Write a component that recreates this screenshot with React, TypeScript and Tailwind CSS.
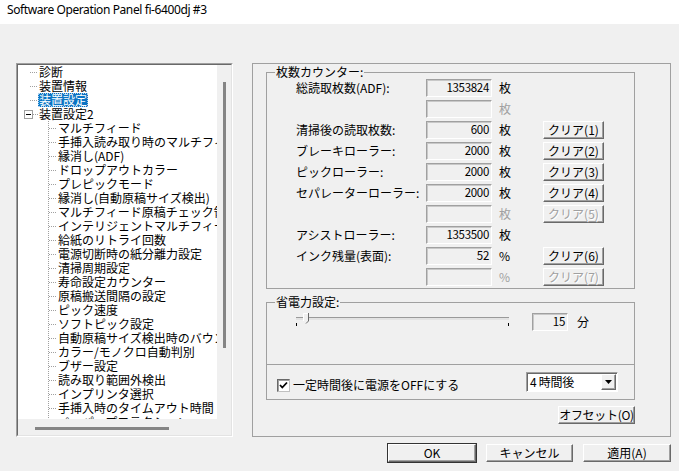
import React from "react";

const FONT = "font-['Noto_Sans_CJK_JP','Noto_Sans',sans-serif]";

const btnBase =
  "h-[18px] shrink-0 whitespace-nowrap flex items-center justify-center bg-[#f0f0f0] border border-t-white border-l-white border-r-[#696969] border-b-[#696969] shadow-[inset_-1px_-1px_#a0a0a0] text-[12px] leading-none";

function Btn({ w, children, disabled }: { w: string; children: React.ReactNode; disabled?: boolean }) {
  return (
    <div className={`${btnBase} ${w} ${disabled ? "text-[#a0a0a0] [text-shadow:1px_1px_#fff]" : "text-black"}`}>
      {children}
    </div>
  );
}

const fieldCls =
  "h-[18px] shrink-0 bg-[#f0f0f0] border border-t-[#a0a0a0] border-l-[#a0a0a0] border-r-white border-b-white shadow-[inset_1px_1px_#c8c8c8] flex items-center justify-end pr-[2px] text-[11.5px] leading-none tracking-[-0.3px]";

type Row = { label?: string; value?: string; unit: string; btn?: string; disabled?: boolean };

const rows: Row[] = [
  { label: "総読取枚数(ADF):", value: "1353824", unit: "枚" },
  { unit: "枚", disabled: true },
  { label: "清掃後の読取枚数:", value: "600", unit: "枚", btn: "クリア(1)" },
  { label: "ブレーキローラー:", value: "2000", unit: "枚", btn: "クリア(2)" },
  { label: "ピックローラー:", value: "2000", unit: "枚", btn: "クリア(3)" },
  { label: "セパレーターローラー:", value: "2000", unit: "枚", btn: "クリア(4)" },
  { unit: "枚", btn: "クリア(5)", disabled: true },
  { label: "アシストローラー:", value: "1353500", unit: "枚" },
  { label: "インク残量(表面):", value: "52", unit: "%", btn: "クリア(6)" },
  { unit: "%", btn: "クリア(7)", disabled: true },
];

const children = [
  "マルチフィード",
  "手挿入読み取り時のマルチフィード設定",
  "縁消し(ADF)",
  "ドロップアウトカラー",
  "プレピックモード",
  "縁消し(自動原稿サイズ検出)",
  "マルチフィード原稿チェック領域設定",
  "インテリジェントマルチフィード設定",
  "給紙のリトライ回数",
  "電源切断時の紙分離力設定",
  "清掃周期設定",
  "寿命設定カウンター",
  "原稿搬送間隔の設定",
  "ピック速度",
  "ソフトピック設定",
  "自動原稿サイズ検出時のバウンダリ",
  "カラー/モノクロ自動判別",
  "ブザー設定",
  "読み取り範囲外検出",
  "インプリンタ選択",
  "手挿入時のタイムアウト時間",
  "ペーパープロテクション",
];

const hdots = "h-px shrink-0 bg-[repeating-linear-gradient(90deg,#a0a0a0_0_1px,transparent_1px_2px)]";
const vdots = "w-px h-full shrink-0 bg-[repeating-linear-gradient(180deg,#a0a0a0_0_1px,transparent_1px_2px)]";

function RootItem({ text, selected }: { text: string; selected?: boolean }) {
  return (
    <div className="h-[14px] flex items-center pl-[12px] whitespace-nowrap">
      <div className={`${hdots} w-[8px]`} />
      <span
        className={`shrink-0 px-[1px] h-[14px] leading-[14px] ${selected ? "bg-[#0a74c4] text-white outline-1 outline-dotted outline-[#b5d4ee] -outline-offset-1" : ""}`}
      >
        {text}
      </span>
    </div>
  );
}

function ChildItem({ text }: { text: string }) {
  return (
    <div className="h-[14px] flex items-center pl-[30px] whitespace-nowrap">
      <div className={vdots} />
      <div className={`${hdots} w-[8px]`} />
      <span className="shrink-0 pl-[1px] leading-[14px]">{text}</span>
    </div>
  );
}

export default function App() {
  return (
    <div className={`w-[679px] h-[471px] bg-[#f0f0f0] flex flex-col overflow-hidden text-black ${FONT}`}>
      {/* title bar */}
      <div className="h-[24px] shrink-0 bg-white pl-[7px] pt-[1px] text-[12px] leading-[18px] font-['Noto_Sans',sans-serif] tracking-[-0.4px]">
        Software Operation Panel fi-6400dj #3
      </div>

      <div className="flex pl-[16px] pt-[39px]">
        {/* tree */}
        <div className="w-[217px] h-[374px] shrink-0 border border-t-[#a0a0a0] border-l-[#a0a0a0] border-r-white border-b-white">
          <div className="w-full h-full border border-t-[#696969] border-l-[#696969] border-r-[#e3e3e3] border-b-[#e3e3e3] flex flex-col">
            <div className="flex h-[354px]">
              <div className="w-[199px] shrink-0 h-full bg-white overflow-hidden text-[12px]">
                <RootItem text="診断" />
                <RootItem text="装置情報" />
                <RootItem text="装置設定" selected />
                <div className="h-[14px] flex items-center pl-[6px] whitespace-nowrap">
                  <div className="w-[9px] h-[9px] shrink-0 border border-[#a0a0a0] bg-white flex items-center justify-center">
                    <div className="w-[5px] h-px bg-black" />
                  </div>
                  <div className={`${hdots} w-[5px]`} />
                  <span className="shrink-0 px-[1px] leading-[14px]">装置設定2</span>
                </div>
                {children.map((c) => (
                  <ChildItem key={c} text={c} />
                ))}
              </div>
              <div className="w-[14px] h-full pl-[6px] pt-[17px]">
                <div className="w-[3px] h-[266px] bg-[#858585]" />
              </div>
            </div>
            <div className="flex-1 pl-[17px] pt-[8px]">
              <div className="w-[134px] h-[3px] bg-[#858585]" />
            </div>
          </div>
        </div>

        {/* right panel */}
        <div className="ml-[19px] w-[419px] h-[374px] shrink-0 border border-[#a0a0a0] pl-[13px] pt-px">
          <fieldset className="w-[369px] border border-[#a0a0a0] pb-[2px]">
            <legend className="ml-[8px] px-[1px] text-[12px] leading-[14px]">枚数カウンター:</legend>
            <div className="flex flex-col gap-[3px]">
              {rows.map((r, i) => (
                <div key={i} className="flex items-center h-[18px] pl-[29px] text-[12px]">
                  <div className="w-[130px] shrink-0 leading-none whitespace-nowrap">{r.label ?? ""}</div>
                  <div className={`${fieldCls} w-[66px]`}>{r.value ?? ""}</div>
                  <div className={`ml-[7px] w-[44px] shrink-0 leading-none ${r.disabled ? "text-[#a0a0a0]" : ""}`}>{r.unit}</div>
                  {r.btn ? (
                    <Btn w="w-[61px]" disabled={r.disabled}>
                      {r.btn}
                    </Btn>
                  ) : null}
                </div>
              ))}
            </div>
          </fieldset>

          <fieldset className="mt-[6px] w-[369px] h-[70px] border border-[#a0a0a0]">
            <legend className="ml-[8px] px-[1px] text-[12px] leading-[14px]">省電力設定:</legend>
            <div className="flex items-center mt-[4px] pl-[29px] h-[18px]">
              <div className="relative w-[213px] h-[18px] shrink-0">
                <div className="absolute left-0 right-0 top-[4px] h-[3px] bg-[#e3e3e3] border-t border-[#9a9a9a]" />
                <div className="absolute left-0 top-[10px] w-px h-[3px] bg-black" />
                <div className="absolute right-0 top-[10px] w-px h-[3px] bg-black" />
                <svg className="absolute left-[7px] top-0" width="6" height="11" viewBox="0 0 6 11">
                  <polygon points="0,0 5,0 5,8 3,10.5 0,8" fill="#f0f0f0" />
                  <polyline points="0.5,8 0.5,0.5 5,0.5" fill="none" stroke="#fff" strokeWidth="1" />
                  <polyline points="5.5,0 5.5,8 3,10.5" fill="none" stroke="#696969" strokeWidth="1" />
                </svg>
              </div>
              <div className={`${fieldCls} ml-[23px] w-[36px]`}>15</div>
              <div className="ml-[9px] text-[12px] leading-none">分</div>
            </div>
          </fieldset>

          <div className="w-[369px] h-[35px] border border-t-0 border-[#a0a0a0] flex items-center pl-[10px] pr-[16px]">
            <div className="mt-[6px] w-[13px] h-[13px] shrink-0 bg-white border border-t-[#696969] border-l-[#696969] border-r-[#c0c0c0] border-b-[#c0c0c0] shadow-[inset_1px_1px_#a0a0a0] flex items-center justify-center">
              <svg width="9" height="9" viewBox="0 0 9 9">
                <polyline points="1,4 3.3,6.5 8,1.5" fill="none" stroke="#000" strokeWidth="1.8" />
              </svg>
            </div>
            <div className="ml-[3px] mt-[6px] text-[12px] leading-none whitespace-nowrap">一定時間後に電源をOFFにする</div>
            <div className="ml-auto w-[92px] h-[20px] shrink-0 bg-white border border-t-[#a0a0a0] border-l-[#a0a0a0] border-r-white border-b-white shadow-[inset_1px_1px_#696969] flex items-center pl-[3px] pr-[1px] text-[12px]">
              <span className="flex-1 leading-none tracking-[-0.3px] whitespace-nowrap">4 時間後</span>
              <div className="w-[15px] h-[16px] shrink-0 bg-[#f0f0f0] border border-t-white border-l-white border-r-[#696969] border-b-[#696969] shadow-[inset_-1px_-1px_#a0a0a0] flex items-center justify-center">
                <svg width="7" height="4" viewBox="0 0 7 4">
                  <polygon points="0,0 7,0 3.5,4" fill="#000" />
                </svg>
              </div>
            </div>
          </div>

          <div className="w-[369px] flex justify-end mt-[6px]">
            <Btn w="w-[77px] tracking-[-0.3px]">オフセット(O)</Btn>
          </div>
        </div>
      </div>

      {/* bottom buttons */}
      <div className="flex justify-end gap-[10px] pr-[8px] mt-[7px]">
        <div className={`${btnBase} w-[88px] outline outline-1 outline-[#333]`}>OK</div>
        <Btn w="w-[87px]">キャンセル</Btn>
        <Btn w="w-[88px]">適用(A)</Btn>
      </div>
    </div>
  );
}
